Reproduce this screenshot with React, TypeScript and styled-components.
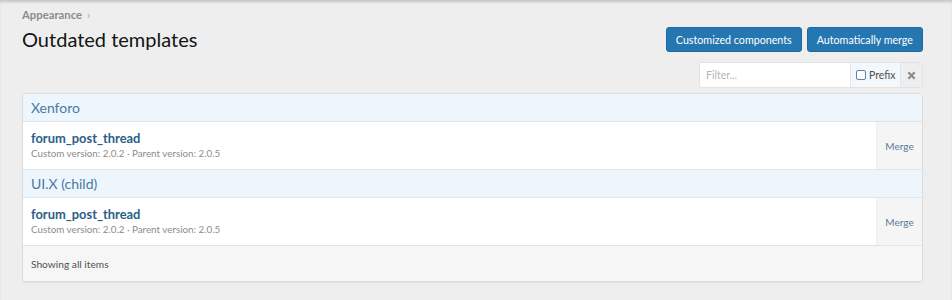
import styled, { createGlobalStyle } from 'styled-components';

const GlobalStyle = createGlobalStyle`
  html, body {
    margin: 0;
    padding: 0;
    background: #eeeeee;
    font-family: Lato, "Noto Sans", sans-serif;
  }
`;

const Page = styled.div`
  min-height: 300px;
  box-shadow: inset 0 3px 3px -1px rgba(0, 0, 0, 0.18);
  padding: 8px 29px 0 22px;
`;

const Breadcrumb = styled.div`
  font-size: 11.3px;
  font-weight: 700;
  color: #8c8c8c;
  line-height: 14px;
  display: flex;
  align-items: center;
  gap: 5px;
`;

const Chevron = styled.span`
  font-weight: 400;
  font-size: 11px;
  color: #a5a5a5;
`;

const TitleRow = styled.div`
  display: flex;
  justify-content: space-between;
  align-items: flex-start;
`;

const Title = styled.h1`
  margin: 4px 0 0;
  font-size: 20px;
  font-weight: 400;
  color: #141414;
  line-height: 26px;
`;

const ButtonGroup = styled.div`
  display: flex;
  gap: 5px;
  margin-top: 5px;
`;

const Button = styled.button`
  background: #2577b1;
  color: #fff;
  border: 1px solid #2069a0;
  border-radius: 3px;
  height: 25px;
  padding: 0 9px;
  font-family: inherit;
  font-size: 10.7px;
  cursor: pointer;
`;

const FilterRow = styled.div`
  display: flex;
  justify-content: flex-end;
  margin-top: 10px;
`;

const FilterBox = styled.div`
  display: flex;
  height: 24px;
  border: 1px solid #e2e2e2;
  border-radius: 3px;
  background: #fff;
  overflow: hidden;
`;

const FilterInput = styled.input`
  width: 138px;
  border: none;
  outline: none;
  padding: 0 6px;
  font-family: inherit;
  font-size: 10.5px;
  color: #333;
  &::placeholder {
    color: #b5b5b5;
  }
`;

const PrefixLabel = styled.label`
  display: flex;
  align-items: center;
  gap: 3px;
  width: 50px;
  box-sizing: border-box;
  padding: 0 5px;
  background: #f3f8fc;
  border-left: 1px solid #e5e5e5;
  font-size: 10.5px;
  color: #505050;
`;

const Check = styled.span`
  flex-shrink: 0;
  width: 8px;
  height: 8px;
  border: 1px solid #5a85ad;
  border-radius: 2px;
  background: #fff;
`;

const ClearButton = styled.span`
  display: flex;
  align-items: center;
  justify-content: center;
  width: 21px;
  background: #eeeeee;
  border-left: 1px solid #e5e5e5;
  color: #8a8a8a;
`;

const Block = styled.div`
  margin-top: 5px;
  background: #fff;
  border: 1px solid #dcdcdc;
  border-radius: 3px;
  overflow: hidden;
  box-shadow: 0 1px 1px rgba(0, 0, 0, 0.05);
`;

const GroupHeader = styled.div`
  height: 27px;
  padding: 0 8px;
  display: flex;
  align-items: center;
  background: #edf6fd;
  border-bottom: 1px solid #dbe5ee;
  font-size: 14px;
  color: #4a7aa0;
`;

const Row = styled.div`
  display: flex;
  border-bottom: 1px solid #e5e5e5;
`;

const RowMain = styled.div`
  flex: 1;
  padding: 8px 8px 0;
  height: 39px;
`;

const RowTitle = styled.div`
  font-size: 12.9px;
  font-weight: 700;
  color: #2c5e86;
  line-height: 16px;
`;

const RowMeta = styled.div`
  font-size: 9.8px;
  color: #8c8c8c;
  line-height: 14px;
`;

const ActionCell = styled.div`
  width: 45px;
  display: flex;
  align-items: center;
  justify-content: center;
  background: #f5f5f5;
  border-left: 1px solid #eeeeee;
  font-size: 10px;
  color: #5c7a94;
`;

const Footer = styled.div`
  height: 35px;
  display: flex;
  align-items: center;
  padding: 0 8px;
  background: #f6f6f6;
  font-size: 10.2px;
  color: #505050;
`;

const items = [
  { group: 'Xenforo', title: 'forum_post_thread' },
  { group: 'UI.X (child)', title: 'forum_post_thread' },
];

const App = () => {
  return (
    <>
      <GlobalStyle />
      <Page>
        <Breadcrumb>
          Appearance <Chevron>›</Chevron>
        </Breadcrumb>
        <TitleRow>
          <Title>Outdated templates</Title>
          <ButtonGroup>
            <Button>Customized components</Button>
            <Button>Automatically merge</Button>
          </ButtonGroup>
        </TitleRow>
        <FilterRow>
          <FilterBox>
            <FilterInput placeholder="Filter..." />
            <PrefixLabel>
              <Check />
              Prefix
            </PrefixLabel>
            <ClearButton>
              <svg width="9" height="9" viewBox="0 0 10 10">
                <path d="M1.5 1.5 L8.5 8.5 M8.5 1.5 L1.5 8.5" stroke="#8a8a8a" strokeWidth="2.4" />
              </svg>
            </ClearButton>
          </FilterBox>
        </FilterRow>
        <Block>
          {items.map((item) => (
            <div key={item.group}>
              <GroupHeader>{item.group}</GroupHeader>
              <Row>
                <RowMain>
                  <RowTitle>{item.title}</RowTitle>
                  <RowMeta>Custom version: 2.0.2 · Parent version: 2.0.5</RowMeta>
                </RowMain>
                <ActionCell>Merge</ActionCell>
              </Row>
            </div>
          ))}
          <Footer>Showing all items</Footer>
        </Block>
      </Page>
    </>
  );
};

export default App;
